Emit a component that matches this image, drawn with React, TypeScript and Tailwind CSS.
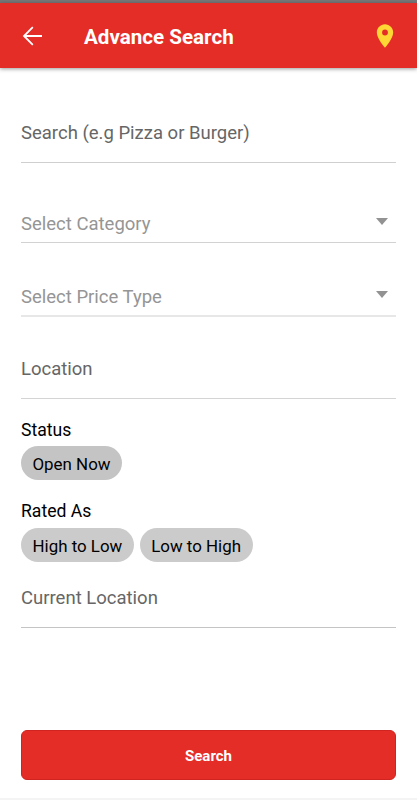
import { MdLocationOn } from 'react-icons/md';

type TextFieldProps = {
  label: string;
  className: string;
};

const TextField = ({ label, className }: TextFieldProps) => (
  <input
    type="text"
    aria-label={label}
    placeholder={label}
    className={`block w-full border-b bg-transparent p-0 pt-px text-[18.5px] text-black outline-none placeholder:text-[#666] ${className}`}
  />
);

const SelectField = ({ label, className }: TextFieldProps) => (
  <button type="button" className={`flex w-full items-center justify-between text-left text-[18.5px] text-[#959595] ${className}`}>
    <span className="pt-0.5">{label}</span>
    <svg viewBox="0 0 12 7" className="mr-2 mb-1 h-[7px] w-3 fill-[#929292]">
      <path d="M0 0h12L6 7z" />
    </svg>
  </button>
);

const Chip = ({ label, className }: TextFieldProps) => (
  <button type="button" className={`h-[34px] rounded-full px-[11.5px] pt-[3px] text-[16.9px] text-black ${className}`}>
    {label}
  </button>
);

export default function App() {
  return (
    <div className="flex h-[800px] w-full flex-col bg-white font-['Roboto',sans-serif] text-black">
      <div className="h-[3px] shrink-0 bg-[#777]" />
      <header className="flex h-[65px] shrink-0 items-center bg-[#e52d27] px-[18px] text-white shadow-[0_1px_4px_rgba(0,0,0,0.4)]">
        <svg viewBox="0 0 28 28" className="size-7 fill-none stroke-current stroke-[1.8]">
          <path d="M24 14H6M14.8 5.2 6 14l8.8 8.8" />
        </svg>
        <h1 className="ml-[38px] flex-1 pt-0.5 text-[20.6px] leading-6 font-bold">Advance Search</h1>
        <MdLocationOn className="size-7 text-[#fdd835]" />
      </header>

      <main className="flex flex-1 flex-col px-[21px]">
        <TextField label="Search (e.g Pizza or Burger)" className="mt-[34px] h-[61px] border-[#cfcfcf]" />
        <SelectField label="Select Category" className="mt-[42px] h-[38px] border-b border-[#d2d2d2]" />
        <SelectField label="Select Price Type" className="mt-[35px] h-[39px] border-b-2 border-[#e7e7e7]" />
        <TextField label="Location" className="mt-[21px] h-[61px] border-[#d4d4d4]" />

        <h2 className="mt-5 text-[17.6px] leading-[22px]">Status</h2>
        <div className="mt-[5px] flex">
          <Chip label="Open Now" className="bg-[#c4c4c4]" />
        </div>

        <h2 className="mt-[20px] text-[17.6px] leading-[22px]">Rated As</h2>
        <div className="mt-[6px] flex gap-1.5">
          <Chip label="High to Low" className="bg-[#cbcbcb]" />
          <Chip label="Low to High" className="bg-[#cbcbcb]" />
        </div>

        <TextField label="Current Location" className="mt-[5px] h-[61px] border-[#c4c4c4]" />

        <button type="button" className="mt-auto mb-[18px] h-[50px] rounded-md border border-[#cf2420] bg-[#e52d27] pt-0.5 text-[15px] font-bold text-white">
          Search
        </button>
      </main>
      <div className="h-0.5 shrink-0 bg-[#f4f4f4]" />
    </div>
  );
}
